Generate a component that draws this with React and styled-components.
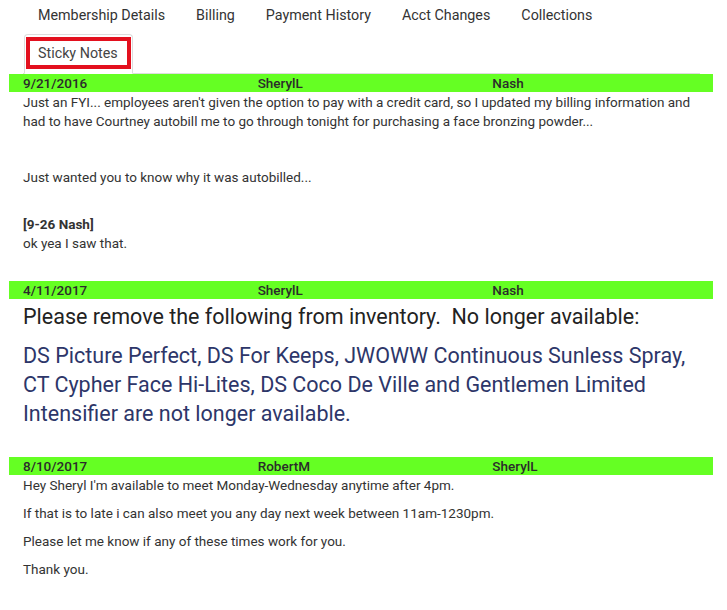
import styled, { createGlobalStyle } from "styled-components";

const GlobalStyle = createGlobalStyle`
  body {
    margin: 0;
    background: #ffffff;
    font-family: Roboto, "Liberation Sans", Arial, sans-serif;
    color: #333333;
  }
`;

const Page = styled.div`
  padding: 0 14px 0 9px;
  overflow: hidden;
  height: 610px;
  box-sizing: border-box;
`;

const Nav = styled.div`
  display: flex;
  flex-wrap: wrap;
  margin: -5px 13px 0 14px;
  border-bottom: 1px solid #dddddd;
`;

const Tab = styled.div`
  height: 39px;
  line-height: 40px;
  padding: 0 15px;
  margin-right: 1px;
  font-size: 14.3px;
  color: #333333;
  box-sizing: border-box;
`;

const ActiveTab = styled.div`
  margin: 0 0 -1px 1px;
  padding: 2px 1px 4px;
  border: 1px solid #dddddd;
  border-bottom-color: #ffffff;
  border-radius: 4px 4px 0 0;
  background: #ffffff;
`;

const Marked = styled.div`
  border: 4px solid #e3101e;
  padding: 0 9px 0 8px;
  height: 24px;
  line-height: 24px;
  font-size: 14.3px;
  color: #444444;
`;

const Note = styled.div`
  margin-bottom: 28px;
`;

const NoteHeader = styled.div`
  display: grid;
  grid-template-columns: repeat(3, 1fr);
  height: 18px;
  background: #65ff23;
  font-size: 13.5px;
  font-weight: 500;
  line-height: 18px;
  color: #2b2b2b;

  span {
    padding-left: 14px;
  }
`;

const NoteBody = styled.div`
  padding: 1px 0 0 14px;
  font-size: 13.5px;
  line-height: 19px;
  color: #333333;
`;

const Para = styled.p`
  margin: 0 0 9px;

  strong {
    font-weight: 700;
  }
`;

const Blank = styled.div`
  height: 19px;
`;

const Lead = styled.p`
  margin: 0 0 8px;
  font-size: 21.5px;
  line-height: 33px;
  color: #222222;
`;

const Big = styled.p`
  margin: 0 0 29px;
  font-size: 21.5px;
  line-height: 29px;
  color: #2d3669;
`;

const tabs = [
  "Membership Details",
  "Billing",
  "Payment History",
  "Acct Changes",
  "Collections",
];

const notes = [
  {
    date: "9/21/2016",
    from: "SherylL",
    to: "Nash",
    body: (
      <>
        <Para>
          Just an FYI... employees aren't given the option to pay with a credit
          card, so I updated my billing information and had to have Courtney
          autobill me to go through tonight for purchasing a face bronzing
          powder...
        </Para>
        <Para>&nbsp;</Para>
        <Para>Just wanted you to know why it was autobilled...</Para>
        <Blank>&nbsp;</Blank>
        <Para>
          <strong>[9-26 Nash]</strong>
          <br />
          ok yea I saw that.
        </Para>
      </>
    ),
  },
  {
    date: "4/11/2017",
    from: "SherylL",
    to: "Nash",
    body: (
      <>
        <Lead>
          Please remove the following from inventory.&nbsp; No longer available:
        </Lead>
        <Big>
          DS Picture Perfect, DS For Keeps, JWOWW Continuous Sunless Spray, CT
          Cypher Face Hi-Lites, DS Coco De Ville and Gentlemen Limited
          Intensifier are not longer available.
        </Big>
      </>
    ),
  },
  {
    date: "8/10/2017",
    from: "RobertM",
    to: "SherylL",
    body: (
      <>
        <Para>
          Hey Sheryl I'm available to meet Monday-Wednesday anytime after 4pm.
        </Para>
        <Para>
          If that is to late i can also meet you any day next week between
          11am-1230pm.
        </Para>
        <Para>Please let me know if any of these times work for you.</Para>
        <Para>Thank you.</Para>
      </>
    ),
  },
];

export default function App() {
  return (
    <Page>
      <GlobalStyle />
      <Nav>
        {tabs.map((t) => (
          <Tab key={t}>{t}</Tab>
        ))}
        <ActiveTab>
          <Marked>Sticky Notes</Marked>
        </ActiveTab>
      </Nav>
      {notes.map((n) => (
        <Note key={n.date}>
          <NoteHeader>
            <span>{n.date}</span>
            <span>{n.from}</span>
            <span>{n.to}</span>
          </NoteHeader>
          <NoteBody>{n.body}</NoteBody>
        </Note>
      ))}
    </Page>
  );
}
